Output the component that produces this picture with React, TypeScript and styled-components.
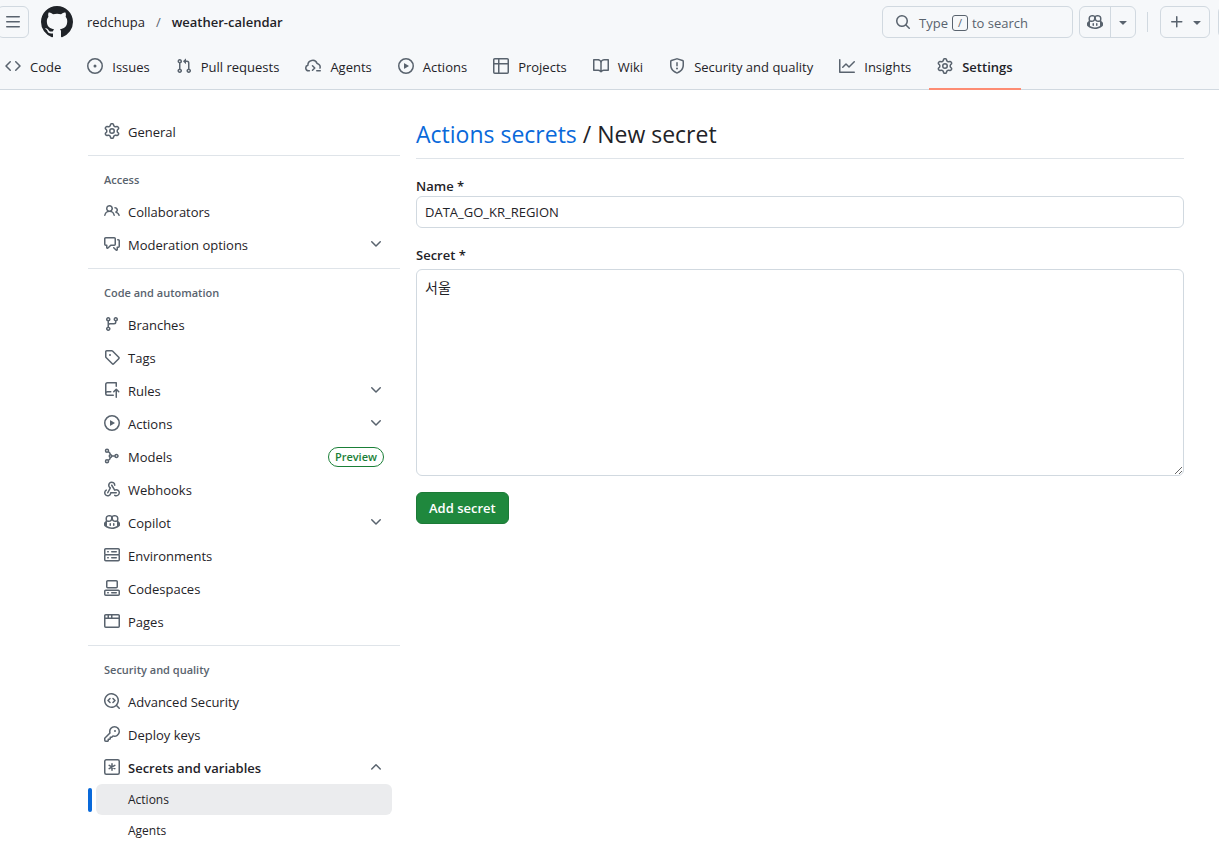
import React from "react";
import styled, { createGlobalStyle } from "styled-components";

const GlobalStyle = createGlobalStyle`
  *, *::before, *::after { box-sizing: border-box; }
  body {
    margin: 0;
    background: #ffffff;
    color: #1f2328;
    font-family: "Open Sans", "Noto Sans", "Noto Sans CJK KR", sans-serif;
    font-size: 13px;
    line-height: 20px;
    overflow-x: hidden;
  }
  button, input, textarea { font: inherit; color: inherit; }
  ul { list-style: none; margin: 0; padding: 0; }
`;

const icons = {
  bars: "M1 2.75A.75.75 0 0 1 1.75 2h12.5a.75.75 0 0 1 0 1.5H1.75A.75.75 0 0 1 1 2.75Zm0 5A.75.75 0 0 1 1.75 7h12.5a.75.75 0 0 1 0 1.5H1.75A.75.75 0 0 1 1 7.75ZM1.75 12h12.5a.75.75 0 0 1 0 1.5H1.75a.75.75 0 0 1 0-1.5Z",
  github:
    "M8 0c4.42 0 8 3.58 8 8a8.013 8.013 0 0 1-5.45 7.59c-.4.08-.55-.17-.55-.38 0-.27.01-1.13.01-2.2 0-.75-.25-1.23-.54-1.48 1.78-.2 3.65-.88 3.65-3.95 0-.88-.31-1.59-.82-2.15.08-.2.36-1.02-.08-2.12 0 0-.67-.22-2.2.82-.64-.18-1.32-.27-2-.27-.68 0-1.36.09-2 .27-1.53-1.03-2.2-.82-2.2-.82-.44 1.1-.16 1.92-.08 2.12-.51.56-.82 1.28-.82 2.15 0 3.06 1.86 3.75 3.64 3.95-.23.2-.44.55-.51 1.07-.46.21-1.61.55-2.33-.66-.15-.24-.6-.83-1.23-.82-.67.01-.27.38.01.53.34.19.73.9.82 1.13.16.45.68 1.31 2.69.94 0 .67.01 1.3.01 1.49 0 .21-.15.45-.55.38A7.995 7.995 0 0 1 0 8c0-4.42 3.58-8 8-8Z",
  search:
    "M10.68 11.74a6 6 0 0 1-7.922-8.982 6 6 0 0 1 8.982 7.922l3.04 3.04a.749.749 0 0 1-.326 1.275.749.749 0 0 1-.734-.215ZM11.5 7a4.499 4.499 0 1 0-8.997 0A4.499 4.499 0 0 0 11.5 7Z",
  plus: "M7.75 2a.75.75 0 0 1 .75.75V7h4.25a.75.75 0 0 1 0 1.5H8.5v4.25a.75.75 0 0 1-1.5 0V8.5H2.75a.75.75 0 0 1 0-1.5H7V2.75A.75.75 0 0 1 7.75 2Z",
  triangle:
    "m4.427 7.427 3.396 3.396a.25.25 0 0 0 .354 0l3.396-3.396A.25.25 0 0 0 11.396 7H4.604a.25.25 0 0 0-.177.427Z",
  chevronDown:
    "M12.78 5.22a.749.749 0 0 1 0 1.06l-4.25 4.25a.749.749 0 0 1-1.06 0L3.22 6.28a.749.749 0 1 1 1.06-1.06L8 8.939l3.72-3.719a.749.749 0 0 1 1.06 0Z",
  chevronUp:
    "M3.22 10.53a.749.749 0 0 1 0-1.06l4.25-4.25a.749.749 0 0 1 1.06 0l4.25 4.25a.749.749 0 1 1-1.06 1.06L8 6.811 4.28 10.53a.749.749 0 0 1-1.06 0Z",
  code: "m11.28 3.22 4.25 4.25a.75.75 0 0 1 0 1.06l-4.25 4.25a.749.749 0 0 1-1.275-.326.749.749 0 0 1 .215-.734L13.94 8l-3.72-3.72a.749.749 0 0 1 .326-1.275.749.749 0 0 1 .734.215Zm-6.56 0a.751.751 0 0 1 1.042.018.751.751 0 0 1 .018 1.042L2.06 8l3.72 3.72a.749.749 0 0 1-.326 1.275.749.749 0 0 1-.734-.215L.47 8.53a.75.75 0 0 1 0-1.06Z",
  issue:
    "M8 9.5a1.5 1.5 0 1 0 0-3 1.5 1.5 0 0 0 0 3ZM8 0a8 8 0 1 1 0 16A8 8 0 0 1 8 0ZM1.5 8a6.5 6.5 0 1 0 13 0 6.5 6.5 0 0 0-13 0Z",
  pull: "M1.5 3.25a2.25 2.25 0 1 1 3 2.122v5.256a2.251 2.251 0 1 1-1.5 0V5.372A2.25 2.25 0 0 1 1.5 3.25Zm5.677-.177L9.573.677A.25.25 0 0 1 10 .854V2.5h1A2.5 2.5 0 0 1 13.5 5v5.628a2.251 2.251 0 1 1-1.5 0V5a1 1 0 0 0-1-1h-1v1.646a.25.25 0 0 1-.427.177L7.177 3.427a.25.25 0 0 1 0-.354ZM3.75 2.5a.75.75 0 1 0 0 1.5.75.75 0 0 0 0-1.5Zm0 9.5a.75.75 0 1 0 0 1.5.75.75 0 0 0 0-1.5Zm8.25.75a.75.75 0 1 0 1.5 0 .75.75 0 0 0-1.5 0Z",
  play: "M8 0a8 8 0 1 1 0 16A8 8 0 0 1 8 0ZM1.5 8a6.5 6.5 0 1 0 13 0 6.5 6.5 0 0 0-13 0Zm4.879-2.773 4.264 2.559a.25.25 0 0 1 0 .428l-4.264 2.559A.25.25 0 0 1 6 10.559V5.442a.25.25 0 0 1 .379-.215Z",
  table:
    "M0 1.75C0 .784.784 0 1.75 0h12.5C15.216 0 16 .784 16 1.75v12.5A1.75 1.75 0 0 1 14.25 16H1.75A1.75 1.75 0 0 1 0 14.25ZM6.5 6.5v8h7.75a.25.25 0 0 0 .25-.25V6.5Zm8-1.5V1.75a.25.25 0 0 0-.25-.25H6.5V5Zm-13 1.5v7.75c0 .138.112.25.25.25H5v-8ZM5 5V1.5H1.75a.25.25 0 0 0-.25.25V5Z",
  book: "M0 1.75A.75.75 0 0 1 .75 1h4.253c1.227 0 2.317.59 3 1.501A3.743 3.743 0 0 1 11.006 1h4.245a.75.75 0 0 1 .75.75v10.5a.75.75 0 0 1-.75.75h-4.507a2.25 2.25 0 0 0-1.591.659l-.622.621a.75.75 0 0 1-1.06 0l-.622-.621A2.25 2.25 0 0 0 5.258 13H.75a.75.75 0 0 1-.75-.75Zm7.251 10.324.004-5.073-.002-2.253A2.25 2.25 0 0 0 5.003 2.5H1.5v9h3.757a3.75 3.75 0 0 1 1.994.574ZM8.755 4.75l-.004 7.322a3.752 3.752 0 0 1 1.992-.572H14.5v-9h-3.495a2.25 2.25 0 0 0-2.25 2.25Z",
  shield:
    "M7.467.133a1.748 1.748 0 0 1 1.066 0l5.25 1.68A1.75 1.75 0 0 1 15 3.48V7c0 1.566-.32 3.182-1.303 4.682-.983 1.498-2.585 2.813-5.032 3.855a1.697 1.697 0 0 1-1.33 0c-2.447-1.042-4.049-2.357-5.032-3.855C1.32 10.182 1 8.566 1 7V3.48a1.755 1.755 0 0 1 1.217-1.667Zm.61 1.429a.25.25 0 0 0-.153 0l-5.25 1.68a.25.25 0 0 0-.174.238V7c0 1.358.275 2.666 1.057 3.86.784 1.194 2.121 2.34 4.366 3.297a.196.196 0 0 0 .154 0c2.245-.956 3.582-2.104 4.366-3.298C13.225 9.666 13.5 8.36 13.5 7V3.48a.251.251 0 0 0-.174-.237l-5.25-1.68ZM8.75 4.75v3a.75.75 0 0 1-1.5 0v-3a.75.75 0 0 1 1.5 0ZM9 10.5a1 1 0 1 1-2 0 1 1 0 0 1 2 0Z",
  graph:
    "M1.5 1.75V13.5h13.75a.75.75 0 0 1 0 1.5H.75a.75.75 0 0 1-.75-.75V1.75a.75.75 0 0 1 1.5 0Zm14.28 2.53-5.25 5.25a.75.75 0 0 1-1.06 0L7 7.06 4.28 9.78a.751.751 0 0 1-1.042-.018.751.751 0 0 1-.018-1.042l3.25-3.25a.75.75 0 0 1 1.06 0L10 7.94l4.72-4.72a.751.751 0 0 1 1.042.018.751.751 0 0 1 .018 1.042Z",
  gear: "M8 0a8.2 8.2 0 0 1 .701.031C9.444.095 9.99.645 10.16 1.29l.288 1.107c.018.066.079.158.212.224.231.114.454.243.668.386.123.082.233.09.299.071l1.103-.303c.644-.176 1.392.021 1.82.63.27.385.506.792.704 1.218.315.675.111 1.422-.364 1.891l-.814.806c-.049.048-.098.147-.088.294.016.257.016.515 0 .772-.01.147.038.246.088.294l.814.806c.475.469.679 1.216.364 1.891a7.977 7.977 0 0 1-.704 1.217c-.428.61-1.176.807-1.82.63l-1.102-.302c-.067-.019-.177-.011-.3.071a5.909 5.909 0 0 1-.668.386c-.133.066-.194.158-.211.224l-.29 1.106c-.168.646-.715 1.196-1.458 1.26a8.006 8.006 0 0 1-1.402 0c-.743-.064-1.289-.614-1.458-1.26l-.289-1.106c-.018-.066-.079-.158-.212-.224a5.738 5.738 0 0 1-.668-.386c-.123-.082-.233-.09-.299-.071l-1.103.303c-.644.176-1.392-.021-1.82-.63a8.12 8.12 0 0 1-.704-1.218c-.315-.675-.111-1.422.363-1.891l.815-.806c.05-.048.098-.147.088-.294a6.214 6.214 0 0 1 0-.772c.01-.147-.038-.246-.088-.294l-.815-.806C.635 6.045.431 5.298.746 4.623a7.92 7.92 0 0 1 .704-1.217c.428-.61 1.176-.807 1.82-.63l1.102.302c.067.019.177.011.3-.071.214-.143.437-.272.668-.386.133-.066.194-.158.211-.224l.29-1.106C6.009.645 6.556.095 7.299.03 7.53.01 7.764 0 8 0Zm-.571 1.525c-.036.003-.108.036-.137.146l-.289 1.105c-.147.561-.549.967-.998 1.189-.173.086-.34.183-.5.29-.417.278-.97.423-1.529.27l-1.103-.303c-.109-.03-.175.016-.195.045-.22.312-.412.644-.573.99-.014.031-.021.11.059.19l.815.806c.411.406.562.957.53 1.456a4.709 4.709 0 0 0 0 .582c.032.499-.119 1.05-.53 1.456l-.815.806c-.081.08-.073.159-.059.19.162.346.353.677.573.989.02.03.085.076.195.046l1.102-.303c.56-.153 1.113-.008 1.53.27.161.107.328.204.501.29.447.222.85.629.997 1.189l.289 1.105c.029.109.101.143.137.146a6.6 6.6 0 0 0 1.142 0c.036-.003.108-.036.137-.146l.289-1.105c.147-.561.549-.967.998-1.189.173-.086.34-.183.5-.29.417-.278.97-.423 1.529-.27l1.103.303c.109.029.175-.016.195-.045.22-.313.411-.644.573-.99.014-.031.021-.11-.059-.19l-.815-.806c-.411-.406-.562-.957-.53-1.456a4.709 4.709 0 0 0 0-.582c-.032-.499.119-1.05.53-1.456l.815-.806c.081-.08.073-.159.059-.19a6.464 6.464 0 0 0-.573-.989c-.02-.03-.085-.076-.195-.046l-1.102.303c-.56.153-1.113.008-1.53-.27a4.44 4.44 0 0 0-.501-.29c-.447-.222-.85-.629-.997-1.189l-.289-1.105c-.029-.11-.101-.143-.137-.146a6.6 6.6 0 0 0-1.142 0ZM11 8a3 3 0 1 1-6 0 3 3 0 0 1 6 0ZM9.5 8a1.5 1.5 0 1 0-3.001.001A1.5 1.5 0 0 0 9.5 8Z",
  people:
    "M2 5.5a3.5 3.5 0 1 1 5.898 2.549 5.508 5.508 0 0 1 3.034 4.084.75.75 0 1 1-1.482.235 4 4 0 0 0-7.9 0 .75.75 0 0 1-1.482-.236A5.507 5.507 0 0 1 3.102 8.05 3.493 3.493 0 0 1 2 5.5ZM11 4a3.001 3.001 0 0 1 2.22 5.018 5.01 5.01 0 0 1 2.56 3.012.749.749 0 0 1-.885.954.752.752 0 0 1-.549-.514 3.507 3.507 0 0 0-2.522-2.372.75.75 0 0 1-.574-.73v-.352a.75.75 0 0 1 .416-.672A1.5 1.5 0 0 0 11 5.5.75.75 0 0 1 11 4Zm-5.5-.5a2 2 0 1 0-.001 3.999A2 2 0 0 0 5.5 3.5Z",
  discussion:
    "M1.75 1h8.5c.966 0 1.75.784 1.75 1.75v5.5A1.75 1.75 0 0 1 10.25 10H7.061l-2.574 2.573A1.458 1.458 0 0 1 2 11.543V10h-.25A1.75 1.75 0 0 1 0 8.25v-5.5C0 1.784.784 1 1.75 1ZM1.5 2.75v5.5c0 .138.112.25.25.25h1a.75.75 0 0 1 .75.75v2.19l2.72-2.72a.749.749 0 0 1 .53-.22h3.5a.25.25 0 0 0 .25-.25v-5.5a.25.25 0 0 0-.25-.25h-8.5a.25.25 0 0 0-.25.25Zm13 2a.25.25 0 0 0-.25-.25h-.5a.75.75 0 0 1 0-1.5h.5c.966 0 1.75.784 1.75 1.75v5.5A1.75 1.75 0 0 1 14.25 12H14v1.543a1.458 1.458 0 0 1-2.487 1.03L9.22 12.28a.749.749 0 0 1 .326-1.275.749.749 0 0 1 .734.215l2.22 2.22v-2.19a.75.75 0 0 1 .75-.75h1a.25.25 0 0 0 .25-.25Z",
  branch:
    "M9.5 3.25a2.25 2.25 0 1 1 3 2.122V6A2.5 2.5 0 0 1 10 8.5H6a1 1 0 0 0-1 1v1.128a2.251 2.251 0 1 1-1.5 0V5.372a2.25 2.25 0 1 1 1.5 0v1.836A2.493 2.493 0 0 1 6 7h4a1 1 0 0 0 1-1v-.628A2.25 2.25 0 0 1 9.5 3.25Zm-6 0a.75.75 0 1 0 1.5 0 .75.75 0 0 0-1.5 0Zm8.25-.75a.75.75 0 1 0 0 1.5.75.75 0 0 0 0-1.5ZM4.25 12a.75.75 0 1 0 0 1.5.75.75 0 0 0 0-1.5Z",
  tag: "M1 7.775V2.75C1 1.784 1.784 1 2.75 1h5.025c.464 0 .91.184 1.238.513l6.25 6.25a1.75 1.75 0 0 1 0 2.474l-5.026 5.026a1.75 1.75 0 0 1-2.474 0l-6.25-6.25A1.752 1.752 0 0 1 1 7.775Zm1.5 0c0 .066.026.13.073.177l6.25 6.25a.25.25 0 0 0 .354 0l5.025-5.025a.25.25 0 0 0 0-.354l-6.25-6.25a.25.25 0 0 0-.177-.073H2.75a.25.25 0 0 0-.25.25ZM6 5a1 1 0 1 1 0 2 1 1 0 0 1 0-2Z",
  rules:
    "M1 2.5A2.5 2.5 0 0 1 3.5 0h8.75a.75.75 0 0 1 .75.75v3.5a.75.75 0 0 1-1.5 0V1.5h-8a1 1 0 0 0-1 1v6.708A2.493 2.493 0 0 1 3.5 9h3.25a.75.75 0 0 1 0 1.5H3.5a1 1 0 0 0 0 2h5.75a.75.75 0 0 1 0 1.5H3.5A2.5 2.5 0 0 1 1 11.5Zm13.23 7.79h-.001l-1.224-1.224v6.184a.75.75 0 0 1-1.5 0V9.066L10.28 10.29a.75.75 0 0 1-1.06-1.061l2.505-2.504a.75.75 0 0 1 1.06 0L15.29 9.23a.751.751 0 0 1-.018 1.042.751.751 0 0 1-1.042.018Z",
  webhook:
    "M5.5 4.25a2.25 2.25 0 0 1 4.5 0 .75.75 0 0 0 1.5 0 3.75 3.75 0 1 0-6.14 2.889l-2.272 4.258a.75.75 0 0 0 1.324.706L7 7.25a.75.75 0 0 0-.309-1.015A2.25 2.25 0 0 1 5.5 4.25ZM7.364 3.607a.75.75 0 0 1 1.03.257l2.608 4.349a3.75 3.75 0 1 1-.628 6.785.75.75 0 0 1 .752-1.299 2.25 2.25 0 1 0-.033-3.88.75.75 0 0 1-1.03-.256L7.107 4.636a.75.75 0 0 1 .257-1.03ZM2.9 8.776A.75.75 0 0 1 2.625 9.8 2.25 2.25 0 1 0 6 11.75a.75.75 0 0 1 .75-.751h5.5a.75.75 0 0 1 0 1.5H7.425a3.751 3.751 0 1 1-5.55-3.998.75.75 0 0 1 1.024.274Z",
  copilot:
    "M7.998 15.035c-4.562 0-7.873-2.914-7.998-3.749V9.338c.085-.628.677-1.686 1.588-2.065.013-.07.024-.143.036-.218.029-.183.06-.384.126-.612-.201-.508-.254-1.084-.254-1.656 0-.87.128-1.769.693-2.484.579-.733 1.494-1.124 2.724-1.261 1.206-.134 2.262.034 2.944.765.05.053.096.108.139.165.044-.057.094-.112.143-.165.682-.731 1.738-.899 2.944-.765 1.23.137 2.145.528 2.724 1.261.566.715.693 1.614.693 2.484 0 .572-.053 1.148-.254 1.656.066.228.098.429.126.612.012.076.024.148.037.218.924.385 1.522 1.471 1.591 2.095v1.872c0 .766-3.351 3.795-8.002 3.795Zm0-1.485c2.28 0 4.584-1.11 5.002-1.433V7.862l-.023-.116c-.49.21-1.075.291-1.727.291-1.146 0-2.059-.327-2.71-.991A3.222 3.222 0 0 1 8 6.303a3.24 3.24 0 0 1-.544.743c-.65.664-1.563.991-2.71.991-.652 0-1.236-.081-1.727-.291l-.023.116v4.255c.419.323 2.722 1.433 5.002 1.433ZM6.762 2.83c-.193-.206-.637-.413-1.682-.297-1.019.113-1.479.404-1.713.7-.247.312-.369.789-.369 1.554 0 .793.129 1.171.308 1.371.162.181.519.379 1.442.379.853 0 1.339-.235 1.638-.54.315-.322.527-.827.617-1.553.117-.935-.037-1.395-.241-1.614Zm4.155-.297c-1.044-.116-1.488.091-1.681.297-.204.219-.359.679-.242 1.614.091.726.303 1.231.618 1.553.299.305.784.54 1.638.54.922 0 1.28-.198 1.442-.379.179-.2.308-.578.308-1.371 0-.765-.123-1.242-.37-1.554-.233-.296-.693-.587-1.713-.7ZM6.25 9.037a.75.75 0 0 1 .75.75v1.501a.75.75 0 0 1-1.5 0V9.787a.75.75 0 0 1 .75-.75Zm4.25.75v1.501a.75.75 0 0 1-1.5 0V9.787a.75.75 0 0 1 1.5 0Z",
  server:
    "M1.75 1h12.5c.966 0 1.75.784 1.75 1.75v4c0 .372-.116.717-.314 1 .198.283.314.628.314 1v4a1.75 1.75 0 0 1-1.75 1.75H1.75A1.75 1.75 0 0 1 0 12.75v-4c0-.358.109-.707.314-1a1.739 1.739 0 0 1-.314-1v-4C0 1.784.784 1 1.75 1ZM1.5 2.75v4c0 .138.112.25.25.25h12.5a.25.25 0 0 0 .25-.25v-4a.25.25 0 0 0-.25-.25H1.75a.25.25 0 0 0-.25.25Zm.25 5.75a.25.25 0 0 0-.25.25v4c0 .138.112.25.25.25h12.5a.25.25 0 0 0 .25-.25v-4a.25.25 0 0 0-.25-.25ZM7 4.75A.75.75 0 0 1 7.75 4h4.5a.75.75 0 0 1 0 1.5h-4.5A.75.75 0 0 1 7 4.75ZM7.75 10h4.5a.75.75 0 0 1 0 1.5h-4.5a.75.75 0 0 1 0-1.5ZM3 4.75A.75.75 0 0 1 3.75 4h.5a.75.75 0 0 1 0 1.5h-.5A.75.75 0 0 1 3 4.75ZM3.75 10h.5a.75.75 0 0 1 0 1.5h-.5a.75.75 0 0 1 0-1.5Z",
  codespaces:
    "M0 11.25c0-.966.784-1.75 1.75-1.75h12.5c.966 0 1.75.784 1.75 1.75v3A1.75 1.75 0 0 1 14.25 16H1.75A1.75 1.75 0 0 1 0 14.25Zm2-9.5C2 .784 2.784 0 3.75 0h8.5C13.216 0 14 .784 14 1.75v5a1.75 1.75 0 0 1-1.75 1.75h-8.5A1.75 1.75 0 0 1 2 6.75Zm1.75-.25a.25.25 0 0 0-.25.25v5c0 .138.112.25.25.25h8.5a.25.25 0 0 0 .25-.25v-5a.25.25 0 0 0-.25-.25Zm-2 9.5a.25.25 0 0 0-.25.25v3c0 .138.112.25.25.25h12.5a.25.25 0 0 0 .25-.25v-3a.25.25 0 0 0-.25-.25ZM7 12.75a.75.75 0 0 1 .75-.75h4.5a.75.75 0 0 1 0 1.5h-4.5a.75.75 0 0 1-.75-.75Zm-4 0a.75.75 0 0 1 .75-.75h.5a.75.75 0 0 1 0 1.5h-.5a.75.75 0 0 1-.75-.75Z",
  browser:
    "M0 2.75C0 1.784.784 1 1.75 1h12.5c.966 0 1.75.784 1.75 1.75v10.5A1.75 1.75 0 0 1 14.25 15H1.75A1.75 1.75 0 0 1 0 13.25ZM14.5 6h-13v7.25c0 .138.112.25.25.25h12.5a.25.25 0 0 0 .25-.25Zm-6-3.5v2h6V2.75a.25.25 0 0 0-.25-.25ZM5 2.5v2h2v-2Zm-3.25 0a.25.25 0 0 0-.25.25V4.5h2v-2Z",
  codescan:
    "M8.47 4.97a.75.75 0 0 0 0 1.06L9.94 7.5 8.47 8.97a.75.75 0 1 0 1.06 1.06l2-2a.75.75 0 0 0 0-1.06l-2-2a.75.75 0 0 0-1.06 0ZM6.53 6.03a.75.75 0 0 0-1.06-1.06l-2 2a.75.75 0 0 0 0 1.06l2 2a.75.75 0 1 0 1.06-1.06L5.06 7.5l1.47-1.47ZM12.246 13.307a7.501 7.501 0 1 1 1.06-1.06l2.474 2.473a.749.749 0 0 1-.326 1.275.749.749 0 0 1-.734-.215ZM1.5 7.5a6.002 6.002 0 0 0 3.608 5.504 6.002 6.002 0 0 0 6.486-1.117.748.748 0 0 1 .292-.293A6 6 0 1 0 1.5 7.5Z",
  key: "M10.5 0a5.499 5.499 0 1 1-1.288 10.848l-.932.932a.749.749 0 0 1-.53.22H7v.75a.749.749 0 0 1-.22.53l-.5.5a.749.749 0 0 1-.53.22H5v.75a.749.749 0 0 1-.22.53l-.5.5a.749.749 0 0 1-.53.22h-2A1.75 1.75 0 0 1 0 14.25v-2c0-.199.079-.389.22-.53l4.932-4.932A5.5 5.5 0 0 1 10.5 0Zm-4 5.5c-.001.431.069.86.205 1.269a.75.75 0 0 1-.181.768L1.5 12.56v1.69c0 .138.112.25.25.25h1.69l.06-.06v-1.19a.75.75 0 0 1 .75-.75h1.19l.06-.06v-1.19a.75.75 0 0 1 .75-.75h1.19l1.023-1.025a.75.75 0 0 1 .768-.18A4 4 0 1 0 6.5 5.5ZM11 6a1 1 0 1 1 0-2 1 1 0 0 1 0 2Z",
};

/* Icons drawn with strokes rather than filled outlines. */
const lineIcons = {
  agents:
    "M4.4 12.75H3.5a2.75 2.75 0 0 1-.6-5.43A4.75 4.75 0 0 1 12.1 5.5a3.6 3.6 0 0 1 2.9 4.6M7.5 7.75 9.75 10 7.5 12.25M11.75 12.75h3.5",
  models:
    "M4.6 3.9C6 4.6 6.2 6 6.4 6.6M4.6 12.1C6 11.4 6.2 10 6.4 9.4M8.3 8h2.6M1.5 2.75a1.5 1.5 0 1 0 3 0 1.5 1.5 0 1 0-3 0M1.5 13.25a1.5 1.5 0 1 0 3 0 1.5 1.5 0 1 0-3 0M11 8a1.5 1.5 0 1 0 3 0 1.5 1.5 0 1 0-3 0M5.25 8a1.25 1.25 0 1 0 2.5 0 1.25 1.25 0 1 0-2.5 0",
  secrets:
    "M2.25.75h11.5a1.5 1.5 0 0 1 1.5 1.5v11.5a1.5 1.5 0 0 1-1.5 1.5H2.25a1.5 1.5 0 0 1-1.5-1.5V2.25a1.5 1.5 0 0 1 1.5-1.5ZM8 4.75v6.5M5.2 6.4l5.6 3.2M10.8 6.4 5.2 9.6",
};

type IconName = keyof typeof icons | keyof typeof lineIcons;

const Svg = styled.svg`
  display: block;
  flex: none;
`;

const Icon = ({ name, size = 16 }: { name: IconName; size?: number }) => (
  <Svg width={size} height={size} viewBox="0 0 16 16" aria-hidden="true">
    {name in icons ? (
      <path d={icons[name as keyof typeof icons]} fill="currentColor" />
    ) : (
      <path
        d={lineIcons[name as keyof typeof lineIcons]}
        fill="none"
        stroke="currentColor"
        strokeWidth="1.5"
        strokeLinecap="round"
        strokeLinejoin="round"
      />
    )}
  </Svg>
);

const Header = styled.header`
  background: #f6f8fa;
  border-bottom: 1px solid #d1d9e0;
`;

const TopBar = styled.div`
  display: flex;
  align-items: center;
  justify-content: space-between;
  height: 44px;
  overflow: hidden;
`;

const TopGroup = styled.div`
  display: flex;
  align-items: center;
`;

const MenuButton = styled.button`
  display: grid;
  place-items: center;
  width: 32px;
  height: 32px;
  margin: 0 12px 0 -3px;
  padding: 0;
  color: #59636e;
  background: transparent;
  border: 1px solid #d1d9e0;
  border-radius: 6px;
`;

const HomeLink = styled.a`
  display: block;
  margin-right: 14px;
  color: #1f2328;
`;

const Crumb = styled.a<{ $current?: boolean }>`
  color: #1f2328;
  font-weight: ${(p) => (p.$current ? 600 : 400)};
  text-decoration: none;
`;

const CrumbSlash = styled.span`
  padding: 0 11px;
  color: #59636e;
`;

const SearchButton = styled.button`
  display: flex;
  align-items: center;
  width: 191px;
  height: 32px;
  margin-right: 6px;
  padding: 0 12px;
  color: #59636e;
  background: transparent;
  border: 1px solid #d1d9e0;
  border-radius: 6px;
`;

const SearchHint = styled.span`
  display: flex;
  align-items: center;
  gap: 4px;
  margin-left: 8px;
  padding-top: 2px;
  white-space: nowrap;
`;

const SlashKey = styled.kbd`
  display: grid;
  place-items: center;
  width: 16px;
  height: 16px;
  font: inherit;
  font-size: 11px;
  line-height: 12px;
  border: 1px solid #59636e;
  border-radius: 3px;
`;

const ButtonGroup = styled.div`
  display: flex;
  height: 32px;
  border: 1px solid #d1d9e0;
  border-radius: 6px;
`;

const GroupButton = styled.button<{ $divided?: boolean; $width: number }>`
  display: grid;
  place-items: center;
  width: ${(p) => p.$width}px;
  padding: 0;
  color: #59636e;
  background: transparent;
  border: 0;
  border-left: ${(p) => (p.$divided ? "1px solid #d1d9e0" : "0")};
`;

const Separator = styled.span`
  width: 1px;
  height: 20px;
  margin: 0 12px 0 11px;
  background: #d1d9e0;
`;

const CreateButton = styled.button`
  display: flex;
  align-items: center;
  gap: 4px;
  height: 32px;
  padding: 0 4px 0 8px;
  color: #59636e;
  background: transparent;
  border: 1px solid #d1d9e0;
  border-radius: 6px;
`;

const ClippedButton = styled.button`
  width: 32px;
  height: 32px;
  margin: 0 -31px 0 8px;
  background: transparent;
  border: 1px solid #d1d9e0;
  border-radius: 6px;
`;

const RepoNav = styled.nav`
  display: flex;
  gap: 10px;
  height: 45px;
  margin-left: -3px;
`;

const Tab = styled.a<{ $active?: boolean }>`
  display: flex;
  align-items: center;
  gap: 9px;
  margin-bottom: -1px;
  padding: 2px 8px 0;
  color: #1f2328;
  font-weight: ${(p) => (p.$active ? 600 : 400)};
  white-space: nowrap;
  text-decoration: none;
  border-bottom: 2px solid ${(p) => (p.$active ? "#fd8c73" : "transparent")};

  svg {
    margin-bottom: 2px;
    color: #59636e;
  }
`;

const Page = styled.div`
  display: flex;
  align-items: flex-start;
  gap: 16px;
  padding: 25px 35px 0 88px;
`;

const Sidebar = styled.nav`
  flex: none;
  width: 312px;
`;

const Section = styled.section`
  & + & {
    margin-top: 7px;
    padding-top: 8px;
    border-top: 1px solid #d1d9e0b3;
  }
`;

const SectionTitle = styled.h2`
  margin: 0;
  padding: 6px 16px 5px;
  color: #59636e;
  font-size: 11px;
  font-weight: 600;
  line-height: 20px;
`;

const NavItem = styled.a<{ $bold?: boolean }>`
  display: flex;
  align-items: center;
  gap: 8px;
  height: 33px;
  padding: 0 16px;
  color: #1f2328;
  font-weight: ${(p) => (p.$bold ? 600 : 400)};
  text-decoration: none;

  svg {
    margin-bottom: 2px;
    color: #59636e;
  }
`;

const NavText = styled.span`
  flex: 1;
`;

const PreviewLabel = styled.span`
  padding: 0 6px;
  color: #1a7f37;
  font-size: 11px;
  font-weight: 600;
  line-height: 18px;
  border: 1px solid #1a7f37;
  border-radius: 10px;
`;

const SubRow = styled.li<{ $active?: boolean }>`
  display: flex;
  align-items: center;
  gap: 4px;
  padding-right: 8px;

  &::before {
    content: "";
    width: 4px;
    height: 24px;
    border-radius: 6px;
    background: ${(p) => (p.$active ? "#0969da" : "transparent")};
  }
`;

const SubLink = styled.a<{ $active?: boolean }>`
  flex: 1;
  padding: 6px 32px 5px;
  color: #1f2328;
  font-size: 12px;
  line-height: 20px;
  text-decoration: none;
  border-radius: 6px;
  background: ${(p) => (p.$active ? "#ebecee" : "transparent")};
`;

const Main = styled.main`
  flex: 1;
  min-width: 0;
`;

const Title = styled.h1`
  margin: 0 0 16px;
  padding: 1px 0 6px;
  font-size: 23px;
  font-weight: 400;
  line-height: 36px;
  border-bottom: 1px solid #d1d9e0b3;
`;

const TitleLink = styled.a`
  color: #0969da;
  text-decoration: none;
`;

const Field = styled.div`
  margin-bottom: 16px;
`;

const Label = styled.label`
  display: block;
  padding-top: 1px;
  font-weight: 600;
`;

const TextInput = styled.input`
  display: block;
  width: 100%;
  height: 32px;
  padding: 0 8px;
  background: #ffffff;
  border: 1px solid #d1d9e0;
  border-radius: 6px;
`;

const SecretArea = styled.textarea`
  display: block;
  width: 100%;
  height: 207px;
  margin-top: 4px;
  padding: 8px;
  font-size: 14px;
  background: #ffffff;
  border: 1px solid #d1d9e0;
  border-radius: 6px;
  resize: vertical;
`;

const SubmitButton = styled.button`
  height: 32px;
  padding: 0 12px;
  color: #ffffff;
  font-weight: 600;
  background: #1f883d;
  border: 1px solid #1c7a37;
  border-radius: 6px;
`;

const tabs: { label: string; icon: IconName; active?: boolean }[] = [
  { label: "Code", icon: "code" },
  { label: "Issues", icon: "issue" },
  { label: "Pull requests", icon: "pull" },
  { label: "Agents", icon: "agents" },
  { label: "Actions", icon: "play" },
  { label: "Projects", icon: "table" },
  { label: "Wiki", icon: "book" },
  { label: "Security and quality", icon: "shield" },
  { label: "Insights", icon: "graph" },
  { label: "Settings", icon: "gear", active: true },
];

type Item = { label: string; icon: IconName; trail?: "down" | "up" | "preview" };

const sections: { title?: string; items: Item[] }[] = [
  { items: [{ label: "General", icon: "gear" }] },
  {
    title: "Access",
    items: [
      { label: "Collaborators", icon: "people" },
      { label: "Moderation options", icon: "discussion", trail: "down" },
    ],
  },
  {
    title: "Code and automation",
    items: [
      { label: "Branches", icon: "branch" },
      { label: "Tags", icon: "tag" },
      { label: "Rules", icon: "rules", trail: "down" },
      { label: "Actions", icon: "play", trail: "down" },
      { label: "Models", icon: "models", trail: "preview" },
      { label: "Webhooks", icon: "webhook" },
      { label: "Copilot", icon: "copilot", trail: "down" },
      { label: "Environments", icon: "server" },
      { label: "Codespaces", icon: "codespaces" },
      { label: "Pages", icon: "browser" },
    ],
  },
  {
    title: "Security and quality",
    items: [
      { label: "Advanced Security", icon: "codescan" },
      { label: "Deploy keys", icon: "key" },
      { label: "Secrets and variables", icon: "secrets", trail: "up" },
    ],
  },
];

export default function App() {
  return (
    <>
      <GlobalStyle />
      <Header>
        <TopBar>
          <TopGroup>
            <MenuButton aria-label="Open menu">
              <Icon name="bars" />
            </MenuButton>
            <HomeLink href="#" aria-label="Homepage">
              <Icon name="github" size={32} />
            </HomeLink>
            <Crumb href="#">redchupa</Crumb>
            <CrumbSlash>/</CrumbSlash>
            <Crumb href="#" $current>
              weather-calendar
            </Crumb>
          </TopGroup>
          <TopGroup>
            <SearchButton>
              <Icon name="search" />
              <SearchHint>
                Type <SlashKey>/</SlashKey> to search
              </SearchHint>
            </SearchButton>
            <ButtonGroup>
              <GroupButton $width={30} aria-label="Chat with Copilot">
                <Icon name="copilot" />
              </GroupButton>
              <GroupButton $width={25} $divided aria-label="Open Copilot menu">
                <Icon name="triangle" />
              </GroupButton>
            </ButtonGroup>
            <Separator />
            <CreateButton aria-label="Create new">
              <Icon name="plus" />
              <Icon name="triangle" />
            </CreateButton>
            <ClippedButton aria-label="Issues" />
          </TopGroup>
        </TopBar>
        <RepoNav aria-label="Repository">
          {tabs.map((tab) => (
            <Tab key={tab.label} href="#" $active={tab.active}>
              <Icon name={tab.icon} />
              {tab.label}
            </Tab>
          ))}
        </RepoNav>
      </Header>
      <Page>
        <Sidebar aria-label="Settings">
          {sections.map((section, index) => (
            <Section key={index}>
              {section.title && <SectionTitle>{section.title}</SectionTitle>}
              {section.items.map((item) => (
                <NavItem key={item.label} href="#" $bold={item.trail === "up"}>
                  <Icon name={item.icon} />
                  <NavText>{item.label}</NavText>
                  {item.trail === "down" && <Icon name="chevronDown" />}
                  {item.trail === "up" && <Icon name="chevronUp" />}
                  {item.trail === "preview" && <PreviewLabel>Preview</PreviewLabel>}
                </NavItem>
              ))}
            </Section>
          ))}
          <ul>
            <SubRow $active>
              <SubLink href="#" $active>
                Actions
              </SubLink>
            </SubRow>
            <SubRow>
              <SubLink href="#">Agents</SubLink>
            </SubRow>
          </ul>
        </Sidebar>
        <Main>
          <Title>
            <TitleLink href="#">Actions secrets</TitleLink> / New secret
          </Title>
          <form>
            <Field>
              <Label htmlFor="secret-name">Name *</Label>
              <TextInput id="secret-name" defaultValue="DATA_GO_KR_REGION" />
            </Field>
            <Field>
              <Label htmlFor="secret-value">Secret *</Label>
              <SecretArea id="secret-value" defaultValue="서울" />
            </Field>
            <SubmitButton type="button">Add secret</SubmitButton>
          </form>
        </Main>
      </Page>
    </>
  );
}
